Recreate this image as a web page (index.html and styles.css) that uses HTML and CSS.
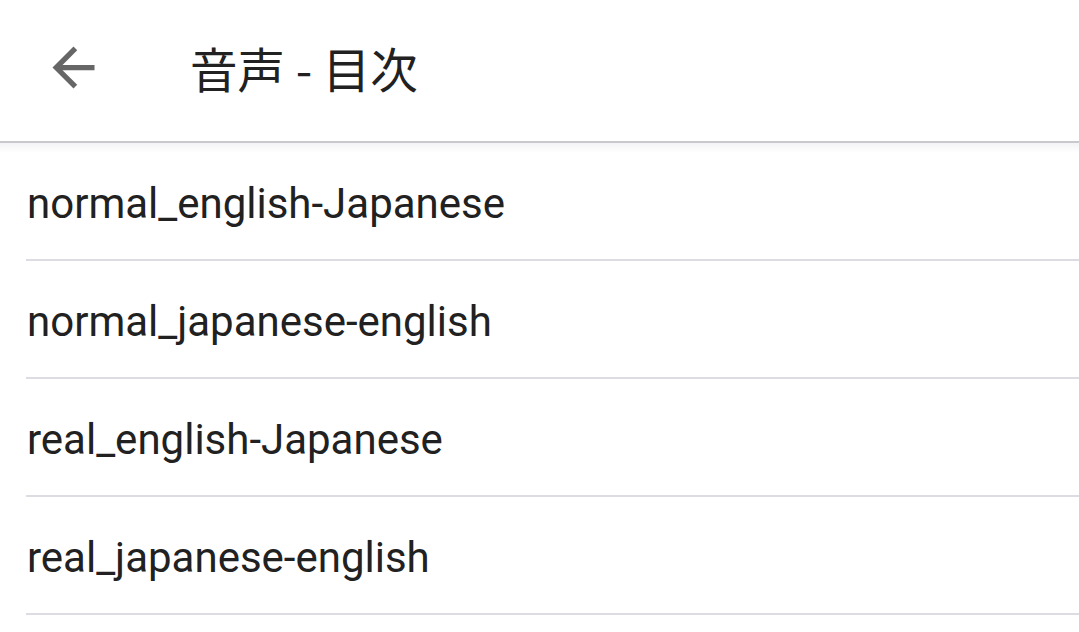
FILE: index.html
```html
<!DOCTYPE html>
<html lang="ja">
<head>
<meta charset="utf-8">
<title>音声 - 目次</title>
<link rel="stylesheet" href="styles.css">
</head>
<body>
<header class="toolbar">
  <button class="back" aria-label="戻る">
    <svg viewBox="0 0 24 24" width="63" height="63"><path d="M20 11H7.83l5.59-5.59L12 4l-8 8 8 8 1.41-1.41L7.83 13H20v-2z" fill="#666666"/></svg>
  </button>
  <h1 class="title">音声 - 目次</h1>
</header>
<ul class="list">
  <li class="item">normal_english-Japanese</li>
  <li class="item">normal_japanese-english</li>
  <li class="item">real_english-Japanese</li>
  <li class="item">real_japanese-english</li>
</ul>
</body>
</html>
```
FILE: styles.css
```css
html, body {
  margin: 0;
  padding: 0;
  background: #ffffff;
  overflow: hidden;
}
body {
  font-family: Roboto, "Noto Sans CJK JP", sans-serif;
  color: #212121;
}
.toolbar {
  height: 141px;
  display: flex;
  align-items: center;
  border-bottom: 2px solid #c9c9cd;
  position: relative;
  box-sizing: content-box;
}
.toolbar::after {
  content: "";
  position: absolute;
  left: 0;
  right: 0;
  top: 143px;
  height: 10px;
  background: linear-gradient(#f3f3f5, rgba(255,255,255,0));
}
.back {
  margin-left: 42px;
  margin-top: -7px;
  width: 63px;
  height: 63px;
  padding: 0;
  border: 0;
  background: none;
  display: flex;
}
.title {
  margin: -6px 0 0 85px;
  font-family: "Noto Sans CJK JP", Roboto, sans-serif;
  font-weight: 400;
  font-size: 47.5px;
  color: #212121;
}
.list {
  list-style: none;
  margin: 0;
  padding: 0 0 0 26px;
}
.item {
  height: 118px;
  box-sizing: border-box;
  padding-top: 4px;
  padding-left: 1px;
  display: flex;
  align-items: center;
  border-bottom: 2px solid #dcdce2;
  font-size: 42px;
}
```
